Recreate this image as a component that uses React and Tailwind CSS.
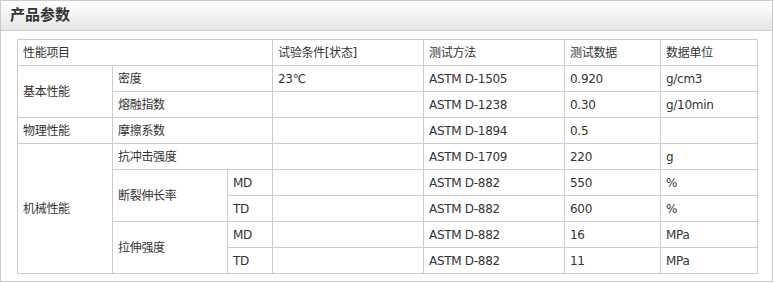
import React from 'react';

const font = { fontFamily: '"DejaVu Sans", "Noto Sans CJK SC", sans-serif' };

const cell = 'border border-[#cccccc] pl-[5px] text-left align-middle font-normal h-[26px] p-0';

function App() {
  return (
    <div className="w-[773px] h-[282px] bg-white text-[#333333] text-[12px] tracking-[-0.3px]" style={font}>
      <div className="w-full h-full border border-[#cccccc] flex flex-col">
        <div className="h-[30px] shrink-0 border-b border-[#cccccc] bg-gradient-to-b from-[#ffffff] to-[#e6e6e6] flex items-center pl-[9px]">
          <h2 className="text-[15px] font-bold text-[#333333] tracking-normal">产品参数</h2>
        </div>
        <div className="pt-[8px] pl-[16px]">
          <table className="table-fixed border-collapse w-[740px]">
            <colgroup>
              <col className="w-[95px]" />
              <col className="w-[115px]" />
              <col className="w-[45px]" />
              <col className="w-[151px]" />
              <col className="w-[141px]" />
              <col className="w-[96px]" />
              <col className="w-[97px]" />
            </colgroup>
            <tbody>
              <tr>
                <td className={cell} colSpan={3}>性能项目</td>
                <td className={cell}>试验条件[状态]</td>
                <td className={cell}>测试方法</td>
                <td className={cell}>测试数据</td>
                <td className={cell}>数据单位</td>
              </tr>
              <tr>
                <td className={cell} rowSpan={2}>基本性能</td>
                <td className={cell} colSpan={2}>密度</td>
                <td className={cell}>23℃</td>
                <td className={cell}>ASTM D-1505</td>
                <td className={cell}>0.920</td>
                <td className={cell}>g/cm3</td>
              </tr>
              <tr>
                <td className={cell} colSpan={2}>熔融指数</td>
                <td className={cell}></td>
                <td className={cell}>ASTM D-1238</td>
                <td className={cell}>0.30</td>
                <td className={cell}>g/10min</td>
              </tr>
              <tr>
                <td className={cell}>物理性能</td>
                <td className={cell} colSpan={2}>摩擦系数</td>
                <td className={cell}></td>
                <td className={cell}>ASTM D-1894</td>
                <td className={cell}>0.5</td>
                <td className={cell}></td>
              </tr>
              <tr>
                <td className={cell} rowSpan={5}>机械性能</td>
                <td className={cell} colSpan={2}>抗冲击强度</td>
                <td className={cell}></td>
                <td className={cell}>ASTM D-1709</td>
                <td className={cell}>220</td>
                <td className={cell}>g</td>
              </tr>
              <tr>
                <td className={cell} rowSpan={2}>断裂伸长率</td>
                <td className={cell}>MD</td>
                <td className={cell}></td>
                <td className={cell}>ASTM D-882</td>
                <td className={cell}>550</td>
                <td className={cell}>%</td>
              </tr>
              <tr>
                <td className={cell}>TD</td>
                <td className={cell}></td>
                <td className={cell}>ASTM D-882</td>
                <td className={cell}>600</td>
                <td className={cell}>%</td>
              </tr>
              <tr>
                <td className={cell} rowSpan={2}>拉伸强度</td>
                <td className={cell}>MD</td>
                <td className={cell}></td>
                <td className={cell}>ASTM D-882</td>
                <td className={cell}>16</td>
                <td className={cell}>MPa</td>
              </tr>
              <tr>
                <td className={cell}>TD</td>
                <td className={cell}></td>
                <td className={cell}>ASTM D-882</td>
                <td className={cell}>11</td>
                <td className={cell}>MPa</td>
              </tr>
            </tbody>
          </table>
        </div>
      </div>
    </div>
  );
}

export default App;
